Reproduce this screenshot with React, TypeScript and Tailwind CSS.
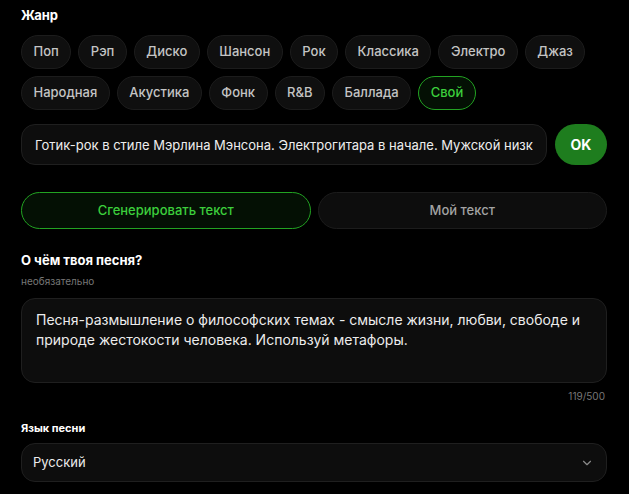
import React, { useState } from 'react';
import { ChevronDown } from 'lucide-react';

const GENRES = [
  'Поп', 'Рэп', 'Диско', 'Шансон', 'Рок', 'Классика', 'Электро', 'Джаз',
  'Народная', 'Акустика', 'Фонк', 'R&B', 'Баллада', 'Свой',
];

export default function App() {
  const [genre, setGenre] = useState('Свой');
  const [mode, setMode] = useState<'gen' | 'own'>('gen');
  const [custom, setCustom] = useState(
    'Готик-рок в стиле Мэрлина Мэнсона. Электрогитара в начале. Мужской низкий вокал.'
  );
  const about =
    'Песня-размышление о философских темах - смысле жизни, любви, свободе и природе жестокости человека. Используй метафоры.';

  return (
    <div className="min-h-screen bg-black text-white px-[21px] pt-[7px] font-['Inter','Noto_Sans',sans-serif]">
      {/* Genre */}
      <div className="text-[13px] leading-[16px] font-bold">Жанр</div>
      <div className="mt-[12px] flex flex-wrap gap-[7px] pr-[20px]">
        {GENRES.map((g) => {
          const active = g === genre;
          return (
            <button
              key={g}
              type="button"
              onClick={() => setGenre(g)}
              className={`h-[34px] px-[11.5px] rounded-full border text-[13px] font-medium ${
                active
                  ? 'border-[#22a322] bg-[#041004] text-[#3ccf3c]'
                  : 'border-[#1c1c1c] bg-[#0f0f0f] text-[#c4c4c4]'
              }`}
            >
              {g}
            </button>
          );
        })}
      </div>

      {/* Custom genre */}
      <div className="mt-[14px] flex gap-[8px] pr-[1px]">
        <input
          value={custom}
          onChange={(e) => setCustom(e.target.value)}
          className="flex-1 min-w-0 h-[41px] px-[13px] rounded-[14px] border border-[#1f1f1f] bg-[#0d0d0d] text-[13px] text-[#ededed] outline-none"
        />
        <button
          type="button"
          className="w-[52px] h-[41px] rounded-full bg-[#1e7d1e] text-[14px] font-bold text-white"
        >
          OK
        </button>
      </div>

      {/* Mode */}
      <div className="mt-[27px] flex gap-[7px] pr-[1px]">
        <button
          type="button"
          onClick={() => setMode('gen')}
          className={`flex-1 h-[37px] rounded-full border text-[13px] font-medium ${
            mode === 'gen'
              ? 'border-[#22a322] bg-[#041004] text-[#3ccf3c]'
              : 'border-[#1c1c1c] bg-[#0d0d0d] text-[#a3a3a3]'
          }`}
        >
          Сгенерировать текст
        </button>
        <button
          type="button"
          onClick={() => setMode('own')}
          className={`flex-1 h-[37px] rounded-full border text-[13px] font-medium ${
            mode === 'own'
              ? 'border-[#22a322] bg-[#041004] text-[#3ccf3c]'
              : 'border-[#1c1c1c] bg-[#0d0d0d] text-[#a3a3a3]'
          }`}
        >
          Мой текст
        </button>
      </div>

      {/* About */}
      <div className="mt-[21px] text-[13px] leading-[20px] font-bold">О чём твоя песня?</div>
      <div className="mt-[4px] text-[10px] leading-[14px] text-[#777777]">необязательно</div>
      <div className="mt-[10px] h-[85px] px-[14px] pt-[11px] rounded-[14px] border border-[#1f1f1f] bg-[#0d0d0d] text-[14px] leading-[20px] text-[#ececec] mr-[1px]">
        {about}
      </div>
      <div className="mt-[6px] text-right text-[10px] leading-[14px] text-[#777777] pr-[3px]">
        {about.length}/500
      </div>

      {/* Language */}
      <div className="mt-[18px] text-[11px] leading-[14px] font-bold">Язык песни</div>
      <div className="mt-[8px] h-[39px] flex items-center justify-between pl-[11px] pr-[12px] rounded-[14px] border border-[#1f1f1f] bg-[#0d0d0d] mr-[1px]">
        <span className="text-[13px] text-[#ececec]">Русский</span>
        <ChevronDown size={14} className="text-[#8a8a8a]" />
      </div>
    </div>
  );
}
